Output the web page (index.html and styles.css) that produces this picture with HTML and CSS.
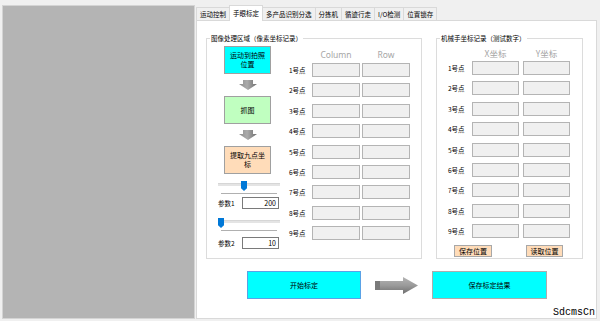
FILE: index.html
```html
<!DOCTYPE html>
<html lang="zh-CN">
<head>
<meta charset="utf-8">
<title>手眼标定</title>
<link rel="stylesheet" href="styles.css">
</head>
<body>
<div class="app">
  <div class="viewer"></div>
  <div class="tabctl">
    <div class="tabstrip">
      <div class="tab">运动控制</div>
      <div class="tab active">手眼标定</div>
      <div class="tab">多产品识别分选</div>
      <div class="tab">分拣机</div>
      <div class="tab">循迹行走</div>
      <div class="tab">I/O检测</div>
      <div class="tab">位置锁存</div>
    </div>
    <div class="page">
      <div class="groups">
        <div class="group group-left">
          <span class="group-title">图像处理区域（像素坐标记录）</span>
          <div class="flow">
            <div class="step step-cyan">运动到拍照位置</div>
            <svg class="darrow" width="20" height="10" viewBox="0 0 20 10">
              <defs>
                <linearGradient id="ga" x1="0" x2="1" y1="0" y2="0">
                  <stop offset="0" stop-color="#8c8c8c"/>
                  <stop offset="0.45" stop-color="#ababab"/>
                  <stop offset="1" stop-color="#6c6c6c"/>
                </linearGradient>
              </defs>
              <path d="M5 0H15V4H19L10 10L1 4H5Z" fill="url(#ga)"/>
            </svg>
            <div class="step step-green">抓图</div>
            <svg class="darrow" width="20" height="10" viewBox="0 0 20 10">
              <path d="M5 0H15V4H19L10 10L1 4H5Z" fill="url(#ga)"/>
            </svg>
            <div class="step step-peach">提取九点坐标</div>
            <div class="slider">
              <div class="track"></div>
              <div class="ticks"></div>
              <div class="thumb" style="left:23px"></div>
            </div>
            <div class="param"><span>参数1</span><div class="num">200</div></div>
            <div class="slider slider-2">
              <div class="track"></div>
              <div class="ticks"></div>
              <div class="thumb" style="left:0px"></div>
            </div>
            <div class="param param-2"><span>参数2</span><div class="num">10</div></div>
          </div>
          <div class="lgrid">
            <div class="head head-left"><span></span><span>Column</span><span>Row</span></div>
            <div class="rows rows-left">
              <span class="lbl">1号点</span><span class="box"></span><span class="box"></span>
              <span class="lbl">2号点</span><span class="box"></span><span class="box"></span>
              <span class="lbl">3号点</span><span class="box"></span><span class="box"></span>
              <span class="lbl">4号点</span><span class="box"></span><span class="box"></span>
              <span class="lbl">5号点</span><span class="box"></span><span class="box"></span>
              <span class="lbl">6号点</span><span class="box"></span><span class="box"></span>
              <span class="lbl">7号点</span><span class="box"></span><span class="box"></span>
              <span class="lbl">8号点</span><span class="box"></span><span class="box"></span>
              <span class="lbl">9号点</span><span class="box"></span><span class="box"></span>
            </div>
          </div>
        </div>
        <div class="group group-right">
          <span class="group-title">机械手坐标记录（测试数字）</span>
          <div class="rgrid">
            <div class="head head-right"><span></span><span>X坐标</span><span>Y坐标</span></div>
            <div class="rows rows-right">
              <span class="lbl">1号点</span><span class="box"></span><span class="box"></span>
              <span class="lbl">2号点</span><span class="box"></span><span class="box"></span>
              <span class="lbl">3号点</span><span class="box"></span><span class="box"></span>
              <span class="lbl">4号点</span><span class="box"></span><span class="box"></span>
              <span class="lbl">5号点</span><span class="box"></span><span class="box"></span>
              <span class="lbl">6号点</span><span class="box"></span><span class="box"></span>
              <span class="lbl">7号点</span><span class="box"></span><span class="box"></span>
              <span class="lbl">8号点</span><span class="box"></span><span class="box"></span>
              <span class="lbl">9号点</span><span class="box"></span><span class="box"></span>
            </div>
            <div class="rbtns">
              <div class="mini">保存位置</div>
              <div class="mini mini-2">读取位置</div>
            </div>
          </div>
        </div>
      </div>
      <div class="actions">
        <div class="bigbtn focus">开始标定</div>
        <svg class="harrow" width="43" height="17" viewBox="0 0 43 17">
          <defs>
            <linearGradient id="gb" x1="0" x2="0" y1="0" y2="1">
              <stop offset="0" stop-color="#b4b4b4"/>
              <stop offset="0.5" stop-color="#9a9a9a"/>
              <stop offset="1" stop-color="#6e6e6e"/>
            </linearGradient>
          </defs>
          <path d="M0 4H28V0L43 8.5L28 17V13H0Z" fill="url(#gb)"/>
          <rect x="0" y="4" width="5" height="9" fill="#7a7a7a"/>
        </svg>
        <div class="bigbtn bigbtn-2">保存标定结果</div>
      </div>
      <div class="watermark">SdcmsCn</div>
    </div>
  </div>
</div>
</body>
</html>
```

FILE: styles.css
```css
* { box-sizing: border-box; }

body {
  margin: 0;
  width: 600px;
  height: 321px;
  overflow: hidden;
  background: #f0f0f0;
  font-family: "Noto Sans CJK SC", "Noto Sans", sans-serif;
  color: #000;
}

.app {
  display: flex;
  height: 321px;
  padding: 5px 0 2px 2px;
}

.viewer {
  width: 193px;
  height: 314px;
  background: #b4b4b4;
  border: 1px solid #d4d4d4;
}

.tabctl {
  margin-left: 1px;
  width: 401px;
  display: flex;
  flex-direction: column;
}

.tabstrip {
  display: flex;
  align-items: flex-end;
  height: 15px;
  padding-left: 1px;
}

.tab {
  height: 13px;
  padding: 0 3px;
  border: 1px solid #d9d9d9;
  border-bottom: 0;
  margin-left: -1px;
  background: #f0f0f0;
  font-size: 6.5px;
  line-height: 12px;
  white-space: nowrap;
}

.tab.active {
  height: 16px;
  margin-bottom: -1px;
  background: #fff;
  position: relative;
  z-index: 1;
  line-height: 15px;
}

.page {
  flex: 1;
  position: relative;
  background: #fff;
  border: 1px solid #d9d9d9;
  padding: 17px 0 0 9px;
}

.groups {
  display: flex;
  gap: 14px;
}

.group {
  position: relative;
  height: 221px;
  border: 1px solid #dcdcdc;
}

.group-left {
  width: 216px;
  display: flex;
}

.group-right {
  width: 147px;
}

.group-title {
  position: absolute;
  top: -6px;
  left: 3px;
  padding: 0 1px;
  background: #fff;
  font-size: 6.5px;
  line-height: 10px;
  white-space: nowrap;
}

/* flow column */
.flow {
  width: 82px;
  padding: 7px 0 0 11px;
  display: flex;
  flex-direction: column;
  align-items: flex-start;
}

.step {
  width: 47px;
  height: 28px;
  margin-left: 6px;
  padding: 0 4px;
  border: 1px solid #a0a0a0;
  display: flex;
  align-items: center;
  justify-content: center;
  text-align: center;
  font-size: 7px;
  line-height: 9px;
}

.step-cyan { background: #00ffff; }
.step-green { background: #c0ffc0; }
.step-peach { background: #ffdcb9; }

.darrow {
  display: block;
  margin: 6px 0 6px 20px;
}

.slider {
  position: relative;
  width: 62px;
  height: 16px;
  margin-top: 5px;
}

.slider-2 { margin-top: 7px; }

.track {
  position: absolute;
  left: 0;
  right: 0;
  top: 4px;
  height: 3px;
  background: #e4e4e4;
  border-top: 1px solid #d6d6d6;
}

.ticks {
  position: absolute;
  left: 3px;
  right: 3px;
  top: 14px;
  height: 1px;
  background: #b0b0b0;
}

.thumb {
  position: absolute;
  top: 2px;
  width: 6px;
  height: 10px;
  background: #0078d7;
  clip-path: polygon(0 0, 100% 0, 100% 72%, 50% 100%, 0 72%);
}

.param {
  display: flex;
  align-items: center;
  justify-content: space-between;
  width: 61px;
  height: 12px;
  margin-top: 2px;
  font-size: 6.5px;
}

.param-2 { margin-top: 5px; }

.num {
  width: 37px;
  height: 12px;
  border: 1px solid #7a7a7a;
  background: #fff;
  text-align: right;
  padding-right: 2px;
  font-size: 7px;
  line-height: 10px;
}

/* point grids */
.lgrid { padding-top: 10px; }
.rgrid { padding: 9px 0 0 11px; }

.head {
  display: grid;
  font-family: "Noto Sans", sans-serif;
  font-size: 8.5px;
  line-height: 11px;
  color: #a6a6a6;
  text-align: center;
}

.head-right {
  font-family: "Noto Sans CJK SC", "Noto Sans", sans-serif;
}

.head-left,
.rows-left {
  grid-template-columns: 21px 48px 48px;
  column-gap: 2px;
  height: auto;
}

.head-left { height: 14px; }

.head-right,
.rows-right {
  grid-template-columns: 20px 47px 47px;
  column-gap: 4px;
}

.head-right { height: 13px; }

.rows {
  display: grid;
  grid-auto-rows: 14px;
  row-gap: 6.4px;
}

.box {
  border: 1px solid #b4b4b4;
  background: #f0f0f0;
}

.lbl {
  font-size: 6.5px;
  line-height: 14px;
  white-space: nowrap;
}

.rbtns {
  display: flex;
  gap: 34px;
  margin-top: 7px;
  padding-left: 6px;
}

.mini {
  width: 38px;
  height: 12px;
  border: 1px solid #a8a8a8;
  background: #ffdcb9;
  font-size: 7px;
  line-height: 10px;
  text-align: center;
}

.mini-2 { width: 37px; }

/* bottom actions */
.actions {
  display: flex;
  align-items: center;
  gap: 14px;
  margin-top: 12px;
  padding-left: 41px;
}

.bigbtn {
  width: 114px;
  height: 28px;
  background: #00ffff;
  border: 1px solid #adadad;
  display: flex;
  align-items: center;
  justify-content: center;
  font-size: 7px;
}

.bigbtn.focus { border-color: #5aa2e6; }
.bigbtn-2 { width: 115px; }

.harrow { display: block; }

.watermark {
  position: absolute;
  right: 1px;
  bottom: 0;
  font-family: "Liberation Mono", monospace;
  font-size: 10px;
  line-height: 10px;
  color: #000;
  background: #fff;
}
```
